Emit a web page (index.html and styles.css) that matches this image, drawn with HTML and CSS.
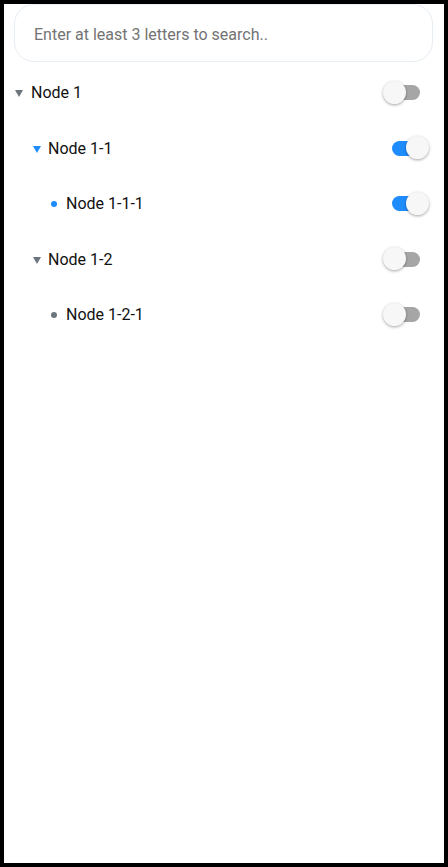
FILE: index.html
```html
<!DOCTYPE html>
<html>
<head>
<meta charset="utf-8">
<link rel="stylesheet" href="styles.css">
</head>
<body>
<div class="frame">
  <div class="search">
    <input class="search-input" type="text" placeholder="Enter at least 3 letters to search..">
  </div>
  <ul class="tree">
    <li class="row lvl0">
      <span class="label"><span class="icon"><span class="caret"></span></span>Node 1</span>
      <span class="toggle"><span class="track"></span><span class="thumb"></span></span>
    </li>
    <li class="row lvl1">
      <span class="label"><span class="icon"><span class="caret blue"></span></span>Node 1-1</span>
      <span class="toggle on"><span class="track"></span><span class="thumb"></span></span>
    </li>
    <li class="row lvl2">
      <span class="label"><span class="icon"><span class="dot blue"></span></span>Node 1-1-1</span>
      <span class="toggle on"><span class="track"></span><span class="thumb"></span></span>
    </li>
    <li class="row lvl1">
      <span class="label"><span class="icon"><span class="caret"></span></span>Node 1-2</span>
      <span class="toggle"><span class="track"></span><span class="thumb"></span></span>
    </li>
    <li class="row lvl2">
      <span class="label"><span class="icon"><span class="dot"></span></span>Node 1-2-1</span>
      <span class="toggle"><span class="track"></span><span class="thumb"></span></span>
    </li>
  </ul>
</div>
</body>
</html>
```
FILE: styles.css
```css
* { box-sizing: border-box; }
html, body { margin: 0; padding: 0; }
body {
  width: 448px;
  height: 867px;
  background: #000;
  font-family: Roboto, "Liberation Sans", sans-serif;
  overflow: hidden;
}
.frame {
  margin: 4px;
  height: 859px;
  background: #fff;
}
.search {
  padding: 0 11px 0 10px;
}
.search-input {
  display: block;
  width: 100%;
  height: 58px;
  border: 1px solid #e6edf3;
  border-radius: 20px;
  padding: 2px 19px 0;
  font-family: Roboto, "Liberation Sans", sans-serif;
  font-size: 16px;
  color: #333;
  outline: none;
  background: #fff;
}
.search-input::placeholder { color: #737373; }
.tree {
  list-style: none;
  margin: 3px 0 0;
  padding: 0;
}
.row {
  height: 55.5px;
  display: flex;
  align-items: center;
  justify-content: space-between;
  padding-right: 23px;
}
.lvl0 { padding-left: 11px; }
.lvl1 { padding-left: 29px; }
.lvl2 { padding-left: 47px; }
.label {
  display: flex;
  align-items: center;
  font-size: 16px;
  color: #111;
}
.icon {
  width: 16px;
  display: flex;
  align-items: center;
}
.lvl1 .icon, .lvl2 .icon { width: 15px; }
.caret {
  width: 0;
  height: 0;
  border-left: 4px solid transparent;
  border-right: 4px solid transparent;
  border-top: 7px solid #6c757d;
  margin-top: 2px;
}
.caret.blue { border-top-color: #1e8cfc; }
.dot {
  width: 6px;
  height: 6px;
  border-radius: 50%;
  background: #6c757d;
  margin-top: 1px;
}
.dot.blue { background: #1e8cfc; }
.toggle {
  position: relative;
  width: 38px;
  height: 24px;
  flex: none;
}
.toggle.on { margin-right: -8px; }
.track {
  position: absolute;
  left: 1px;
  top: 4.5px;
  width: 36px;
  height: 15px;
  border-radius: 8px;
  background: #a6a6a6;
}
.thumb {
  position: absolute;
  left: 0;
  top: 0;
  width: 23px;
  height: 23px;
  border-radius: 50%;
  background: #f7f7f7;
  box-shadow: 0 1px 3px rgba(0,0,0,0.35);
}
.toggle.on .track { background: #1e8cfc; }
.toggle.on .thumb { left: 15px; }
```
